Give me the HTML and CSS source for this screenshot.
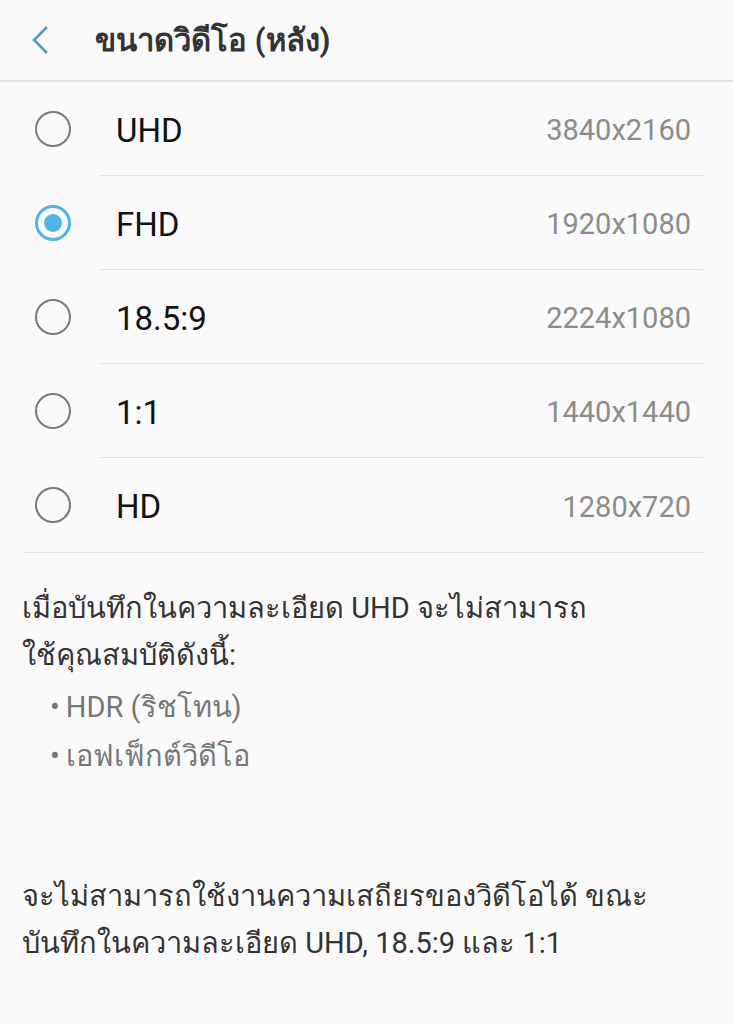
FILE: index.html
```html
<!DOCTYPE html>
<html>
<head>
    <meta charset="UTF-8">
    <title>ขนาดวิดีโอ (หลัง)</title>
    <link rel="stylesheet" href="styles.css">
</head>
<body>
    <div class="header">
        <svg class="back" width="20" height="28" viewBox="0 0 20 28">
            <polyline points="16,1 3,14 16,27" fill="none" stroke="#4a9ec6" stroke-width="2.6"/>
        </svg>
        <h1>ขนาดวิดีโอ (หลัง)</h1>
    </div>

    <div class="list">
        <div class="row">
            <span class="radio"></span>
            <div class="row-body">
                <span class="label">UHD</span>
                <span class="value">3840x2160</span>
            </div>
        </div>
        <div class="row">
            <span class="radio checked"></span>
            <div class="row-body">
                <span class="label">FHD</span>
                <span class="value">1920x1080</span>
            </div>
        </div>
        <div class="row">
            <span class="radio"></span>
            <div class="row-body">
                <span class="label">18.5:9</span>
                <span class="value">2224x1080</span>
            </div>
        </div>
        <div class="row">
            <span class="radio"></span>
            <div class="row-body">
                <span class="label">1:1</span>
                <span class="value">1440x1440</span>
            </div>
        </div>
        <div class="row">
            <span class="radio"></span>
            <div class="row-body last">
                <span class="label">HD</span>
                <span class="value">1280x720</span>
            </div>
        </div>
    </div>

    <div class="notes">
        <p class="note">เมื่อบันทึกในความละเอียด UHD จะไม่สามารถ<br>ใช้คุณสมบัติดังนี้:</p>
        <ul class="bullets">
            <li>HDR (ริชโทน)</li>
            <li>เอฟเฟ็กต์วิดีโอ</li>
        </ul>
        <p class="note bottom">จะไม่สามารถใช้งานความเสถียรของวิดีโอได้ ขณะ<br>บันทึกในความละเอียด UHD, 18.5:9 และ 1:1</p>
    </div>
</body>
</html>
```

FILE: styles.css
```css
body {
    font-family: Roboto, "Noto Sans", sans-serif;
    margin: 0;
    background-color: #fafafa;
    color: #111;
}

.header {
    display: flex;
    align-items: center;
    height: 80px;
    border-bottom: 2px solid #e4e4e4;
}

.back {
    margin-left: 31px;
    margin-right: 44px;
}

h1 {
    margin: 0;
    font-size: 31px;
    font-weight: bold;
    color: #333;
}

.list {
    margin: 0 30px 0 25px;
    border-bottom: 1px solid #e4e4e4;
}

.row {
    display: flex;
    align-items: stretch;
    height: 94px;
}

.radio {
    align-self: center;
    box-sizing: border-box;
    width: 36px;
    height: 36px;
    margin-left: 10px;
    margin-right: 29px;
    border: 2px solid #7a7a7a;
    border-radius: 50%;
    position: relative;
}

.radio.checked {
    border: 3px solid #4db6e2;
}

.radio.checked::after {
    content: "";
    position: absolute;
    left: 6px;
    top: 6px;
    width: 18px;
    height: 18px;
    border-radius: 50%;
    background-color: #4db6e2;
}

.row-body {
    flex: 1;
    display: flex;
    align-items: center;
    justify-content: space-between;
    padding: 3px 12px 0 16px;
    border-bottom: 1px solid #e4e4e4;
}

.row-body.last {
    border-bottom: none;
}

.label {
    font-size: 33px;
    color: #111;
}

.value {
    font-size: 29px;
    color: #8c8c8c;
}

.notes {
    padding: 32px 22px 0 22px;
}

.note {
    margin: 0;
    font-size: 29px;
    line-height: 47px;
    color: #333;
}

.bullets {
    list-style: none;
    margin: 4px 0 0 0;
    padding-left: 28px;
    font-size: 29px;
    line-height: 49px;
    color: #777;
}

.bullets li::before {
    content: "•";
    margin-right: 6px;
}

.note.bottom {
    margin-top: 92px;
}
```
